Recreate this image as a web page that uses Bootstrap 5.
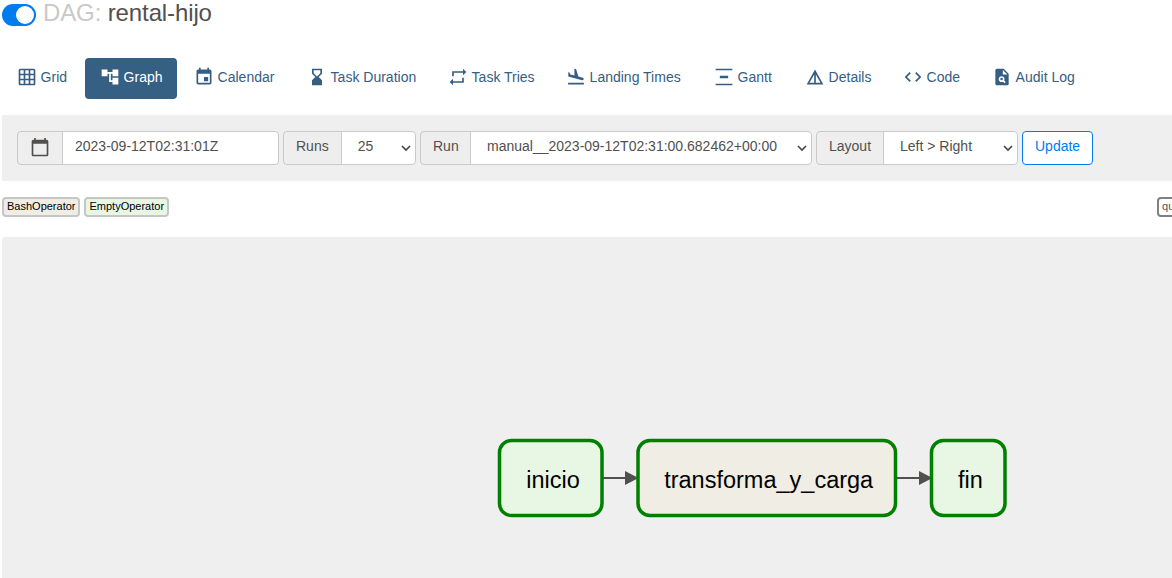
<!DOCTYPE html>
<html lang="en">
<head>
<meta charset="utf-8">
<meta name="viewport" content="width=device-width, initial-scale=1">
<title>rental-hijo - Graph</title>
<link href="https://cdn.jsdelivr.net/npm/bootstrap@5.3.0/dist/css/bootstrap.min.css" rel="stylesheet">
<style>
body{font-family:"Liberation Sans",Arial,sans-serif;font-size:14px;line-height:20px;color:#51504f;background:#fff;height:578px;overflow:hidden}
.page{padding-left:2px;height:578px}
.dag-head{height:58px}
.dag-head h3{font-size:24px;line-height:26px;font-weight:400;margin:0 0 0 7px;letter-spacing:-.12px}
.dag-head h3 span{color:#cac9c8}
.dag-switch{width:34px;height:22px;border-radius:11px;background:#017cee;padding:2px;margin-top:4px}
.dag-switch i{width:18px;height:18px;border-radius:50%;background:#fff}
.dag-tabs{gap:2px;height:57px}
.dag-tabs .nav-link{height:41px;padding:0 15px;color:#355e82;border-radius:4px;gap:4px;white-space:nowrap}
.dag-tabs .nav-link span{margin:-4px 0 0 -.4px}
.dag-tabs .nav-link.active{background:#355f83;color:#fff}
.ico{width:20px;height:20px;fill:currentColor;flex:none;display:block}
.dag-tabs .ico{margin:-4px -.4px 0 .4px}
.toolbar{background:#efefef;height:66px;padding:16px 15px;gap:4px}
.toolbar .input-group{height:34px;width:auto;flex-wrap:nowrap}
.toolbar .input-group-text,.toolbar .form-control,.toolbar .btn,.pick{font-size:14px;line-height:20px;border-color:#cac9c8;border-radius:4px;color:#51504f;height:34px;padding:4px 12px 8px}
.toolbar .input-group-text{background:#eee}
.toolbar .form-control{background:#fff}
.toolbar .pick{padding:4px 16px 8px;position:relative}
.pick svg{position:absolute;right:4px;top:12px;width:10px;height:8px;fill:none;stroke:#444;stroke-width:1.6}
.toolbar .btn{color:#017cee;border-color:#017cee;background:#fff}
.legend{height:56px;padding-top:16px;gap:4px}
.op{font-size:11px;line-height:15px;height:20px;border:2px solid #c6c6c4;border-radius:4px;padding:0 3px;color:#000;white-space:nowrap}
.canvas{background:#efefef;height:341px;border-radius:4px 0 0 0}
.canvas svg{display:block}
.canvas text{font-size:23.5px;text-anchor:middle}
</style>
</head>
<body>
<div class="page d-flex flex-column overflow-hidden">
  <header class="dag-head d-flex align-items-start">
    <div class="dag-switch d-flex justify-content-end"><i></i></div>
    <h3><span>DAG:</span> rental-hijo</h3>
  </header>
  <nav class="dag-tabs nav flex-nowrap align-items-start">
    <a class="nav-link d-flex align-items-center" style="width:81px"><svg class="ico" viewBox="0 0 24 24"><path d="M20 2H4c-1.1 0-2 .9-2 2v16c0 1.1.9 2 2 2h16c1.1 0 2-.9 2-2V4c0-1.1-.9-2-2-2zM8 20H4v-4h4v4zm0-6H4v-4h4v4zm0-6H4V4h4v4zm6 12h-4v-4h4v4zm0-6h-4v-4h4v4zm0-6h-4V4h4v4zm6 12h-4v-4h4v4zm0-6h-4v-4h4v4zm0-6h-4V4h4v4z"/></svg><span>Grid</span></a>
    <a class="nav-link active d-flex align-items-center" style="width:92px"><svg class="ico" viewBox="0 0 24 24"><path d="M22 11V3h-7v3H9V3H2v8h7V8h2v10h4v3h7v-8h-7v3h-2V8h2v3z"/></svg><span>Graph</span></a>
    <a class="nav-link d-flex align-items-center" style="width:111px"><svg class="ico" viewBox="0 0 24 24"><path d="M17 12h-5v5h5v-5zM16 1v2H8V1H6v2H5c-1.11 0-1.99.9-1.99 2L3 19c0 1.1.89 2 2 2h14c1.1 0 2-.9 2-2V5c0-1.1-.9-2-2-2h-1V1h-2zm3 18H5V8h14v11z"/></svg><span>Calendar</span></a>
    <a class="nav-link d-flex align-items-center" style="width:139px"><svg class="ico" viewBox="0 0 24 24"><path d="m18 22-.01-6L14 12l3.99-4.01L18 2H6v6l4 4-4 3.99V22h12zM8 7.5V4h8v3.5l-4 4-4-4z"/></svg><span>Task Duration</span></a>
    <a class="nav-link d-flex align-items-center" style="width:116px"><svg class="ico" viewBox="0 0 24 24"><path d="M5 5h13V2l4 4-4 4V7H7v4H5V5zm14 14H6v3l-4-4 4-4v3h11v-4h2v6z"/></svg><span>Task Tries</span></a>
    <a class="nav-link d-flex align-items-center" style="width:146px"><svg class="ico" viewBox="0 0 24 24"><path d="M2.5 19h19v2h-19zm16.84-3.15c.8.21 1.62-.26 1.84-1.06.21-.8-.26-1.62-1.06-1.84l-5.31-1.42-2.76-9.02L10.12 2v8.28L5.15 8.95l-.93-2.32-1.45-.39v5.17l16.57 4.44z"/></svg><span>Landing Times</span></a>
    <a class="nav-link d-flex align-items-center" style="width:89px"><svg class="ico" viewBox="0 0 24 24"><path d="M22 2v2H2V2h20zM7 10.5v3h10v-3H7zM2 20v2h20v-2H2z"/></svg><span>Gantt</span></a>
    <a class="nav-link d-flex align-items-center" style="width:96px"><svg class="ico" viewBox="0 0 24 24"><path d="M12 3 2 21h20L12 3zm1 5.920L18.600 19H13V8.920zm-2 0V19H5.400L11 8.920z"/></svg><span>Details</span></a>
    <a class="nav-link d-flex align-items-center" style="width:87px"><svg class="ico" viewBox="0 0 24 24"><path d="M9.4 16.6 4.8 12l4.6-4.6L8 6l-6 6 6 6 1.4-1.4zm5.2 0 4.6-4.6-4.6-4.6L16 6l6 6-6 6-1.4-1.4z"/></svg><span>Code</span></a>
    <a class="nav-link d-flex align-items-center"><svg class="ico" viewBox="0 0 24 24"><path fill-rule="evenodd" d="M14 2H6c-1.1 0-2 .9-2 2v16c0 1.1.89 2 2 2h12c1.1 0 2-.9 2-2V8l-6-6zm1.04 17.45-1.88-1.88c-1.33.71-3.01.53-4.13-.59-1.37-1.37-1.37-3.58 0-4.95 1.37-1.37 3.58-1.37 4.95 0 1.12 1.12 1.31 2.8.59 4.13l1.88 1.88-1.41 1.41zM13 9V3.5L18.5 9H13z"/><circle cx="11.5" cy="14.5" r="1.5"/></svg><span>Audit Log</span></a>
  </nav>
  <form class="toolbar d-flex">
    <div class="input-group" style="width:262px">
      <span class="input-group-text"><svg class="ico mt-1" viewBox="0 1 24 24"><path d="M20 3h-1V1h-2v2H7V1H5v2H4c-1.1 0-2 .9-2 2v16c0 1.1.9 2 2 2h16c1.1 0 2-.9 2-2V5c0-1.1-.9-2-2-2zm0 18H4V8h16v13z"/></svg></span>
      <div class="form-control">2023-09-12T02:31:01Z</div>
    </div>
    <div class="input-group" style="width:133px">
      <span class="input-group-text">Runs</span>
      <div class="form-control pick">25<svg viewBox="0 0 10 8"><path d="m1 2 4 4 4-4"/></svg></div>
    </div>
    <div class="input-group" style="width:392px">
      <span class="input-group-text pe-2" style="width:51px">Run</span>
      <div class="form-control pick text-nowrap">manual__2023-09-12T02:31:00.682462+00:00<svg viewBox="0 0 10 8"><path d="m1 2 4 4 4-4"/></svg></div>
    </div>
    <div class="input-group" style="width:202px">
      <span class="input-group-text">Layout</span>
      <div class="form-control pick text-nowrap">Left &gt; Right<svg viewBox="0 0 10 8"><path d="m1 2 4 4 4-4"/></svg></div>
    </div>
    <button type="button" class="btn" style="width:71px">Update</button>
  </form>
  <div class="legend d-flex align-items-start">
    <span class="op" style="background:#f0ede4">BashOperator</span>
    <span class="op" style="background:#e8f7e4">EmptyOperator</span>
    <span class="op flex-shrink-0" style="margin-left:984px;border-color:#808080;color:#51504f">queued</span>
  </div>
  <main class="canvas">
    <svg width="1170" height="341" viewBox="2 237 1170 341">
      <g fill="#51504f" stroke="none">
        <path d="M603 477h23v2h-23zM625 471l13.500 7-13.500 7z"/>
        <path d="M896 477h24v2h-24zM919 471l13.500 7-13.500 7z"/>
      </g>
      <g stroke="#008000" stroke-width="3.5">
        <rect x="499.500" y="440.500" width="102.500" height="75" rx="12" fill="#e8f7e4"/>
        <rect x="638" y="440.500" width="257.500" height="75" rx="12" fill="#f0ede4"/>
        <rect x="931.500" y="440.500" width="73.500" height="75" rx="12" fill="#e8f7e4"/>
      </g>
      <text x="553" y="488">inicio</text>
      <text x="768.700" y="488">transforma_y_carga</text>
      <text x="970.300" y="488">fin</text>
    </svg>
  </main>
</div>
<script src="https://cdn.jsdelivr.net/npm/bootstrap@5.3.0/dist/js/bootstrap.bundle.min.js"></script>
</body>
</html>
